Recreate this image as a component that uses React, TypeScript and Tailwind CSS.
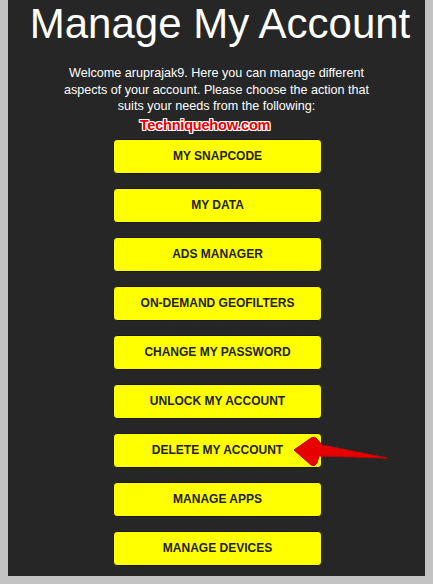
import React from 'react';

const actions = [
  'MY SNAPCODE',
  'MY DATA',
  'ADS MANAGER',
  'ON-DEMAND GEOFILTERS',
  'CHANGE MY PASSWORD',
  'UNLOCK MY ACCOUNT',
  'DELETE MY ACCOUNT',
  'MANAGE APPS',
  'MANAGE DEVICES',
];

// Red pointer arrow drawn over the page
const PointerArrow = () => (
  <svg
    className="absolute left-[280px] top-[430px]"
    width="120"
    height="45"
    viewBox="0 0 120 45"
  >
    <path
      d="M14 20 L31 8 Q35 6 37 9 L42 15 L107 28 L39 26 L37 33 Q35 37 31 35 Z"
      fill="#e60000"
      stroke="#c80000"
      strokeWidth="1"
      strokeLinejoin="round"
    />
  </svg>
);

export default function App() {
  return (
    <div
      className="relative w-[433px] h-[584px] bg-[#c3c3c3] px-[8px] pb-[8px]"
      style={{ fontFamily: '"Liberation Sans", Arial, sans-serif' }}
    >
      <div className="h-full bg-[#262626] flex flex-col items-center">
        <h1 className="text-white text-[42px] leading-[48px] ml-[7px] font-normal">
          Manage My Account
        </h1>
        <p className="text-white text-[12.6px] leading-[16.5px] text-center w-[320px] mt-[17px]">
          Welcome aruprajak9. Here you can manage different aspects of your account. Please choose the action that suits your needs from the following:
        </p>
        <div
          className="mt-[1px] mr-[23px] text-[#e60000] text-[14.5px] leading-[18px] font-bold tracking-[-0.2px]"
          style={{ textShadow: '1px 0 #fff, -1px 0 #fff, 0 1px #fff, 0 -1px #fff, 1px 1px #fff, -1px -1px #fff, 1px -1px #fff, -1px 1px #fff' }}
        >
          Techniquehow.com
        </div>
        <div className="flex flex-col gap-[14px] mt-[5px] ml-[2px]">
          {actions.map((a) => (
            <button
              key={a}
              className="w-[209px] h-[35px] bg-[#ffff00] border border-[#1a1a1a] rounded-[4px] text-[#222222] text-[12px] font-bold flex items-center justify-center"
            >
              {a}
            </button>
          ))}
        </div>
      </div>
      <PointerArrow />
    </div>
  );
}
